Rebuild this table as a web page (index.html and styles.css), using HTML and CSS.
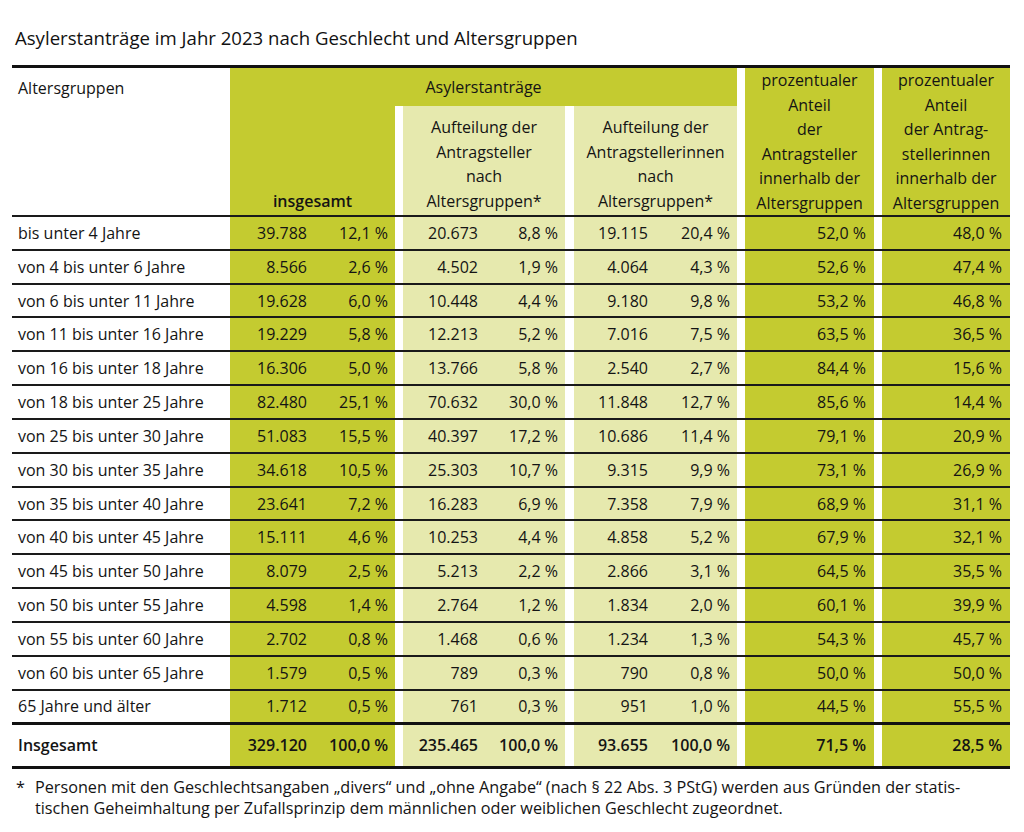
FILE: index.html
```html
<!DOCTYPE html>
<html lang="de">
<head>
<meta charset="utf-8">
<title>Asylerstanträge 2023</title>
<link rel="stylesheet" href="styles.css">
</head>
<body>
<div class="page">
  <h1 class="title">Asylerstanträge im Jahr 2023 nach Geschlecht und Altersgruppen</h1>
  <table class="stats">
    <colgroup>
      <col class="c-label">
      <col class="c-n1"><col class="c-p1">
      <col class="c-gap">
      <col class="c-n2"><col class="c-p2">
      <col class="c-gap9">
      <col class="c-n3"><col class="c-p3">
      <col class="c-gap">
      <col class="c-s1">
      <col class="c-gap">
      <col class="c-s2">
    </colgroup>
    <thead>
      <tr class="h-top">
        <th class="h-label" rowspan="2">Altersgruppen</th>
        <th class="h-main green" colspan="8">Asylerstanträge</th>
        <th class="gap" rowspan="2"></th>
        <th class="h-share green" rowspan="2">prozentualer<br>Anteil<br>der<br>Antragsteller<br>innerhalb der<br>Altersgruppen</th>
        <th class="gap" rowspan="2"></th>
        <th class="h-share green" rowspan="2">prozentualer<br>Anteil<br>der Antrag-<br>stellerinnen<br>innerhalb der<br>Altersgruppen</th>
      </tr>
      <tr class="h-sub">
        <th class="h-total green" colspan="2">insgesamt</th>
        <th class="gap"></th>
        <th class="h-split light" colspan="2">Aufteilung der<br>Antragsteller<br>nach<br>Altersgruppen*</th>
        <th class="gap"></th>
        <th class="h-split light" colspan="2">Aufteilung der<br>Antragstellerinnen<br>nach<br>Altersgruppen*</th>
      </tr>
    </thead>
    <tbody>
      <tr><td class="lbl">bis unter 4 Jahre</td><td class="num green">39.788</td><td class="pct green">12,1&nbsp;%</td><td class="gap"></td><td class="num light">20.673</td><td class="pct light">8,8&nbsp;%</td><td class="gap"></td><td class="num light">19.115</td><td class="pct light">20,4&nbsp;%</td><td class="gap"></td><td class="sh green">52,0&nbsp;%</td><td class="gap"></td><td class="sh green">48,0&nbsp;%</td></tr>
      <tr><td class="lbl">von 4 bis unter 6 Jahre</td><td class="num green">8.566</td><td class="pct green">2,6&nbsp;%</td><td class="gap"></td><td class="num light">4.502</td><td class="pct light">1,9&nbsp;%</td><td class="gap"></td><td class="num light">4.064</td><td class="pct light">4,3&nbsp;%</td><td class="gap"></td><td class="sh green">52,6&nbsp;%</td><td class="gap"></td><td class="sh green">47,4&nbsp;%</td></tr>
      <tr><td class="lbl">von 6 bis unter 11 Jahre</td><td class="num green">19.628</td><td class="pct green">6,0&nbsp;%</td><td class="gap"></td><td class="num light">10.448</td><td class="pct light">4,4&nbsp;%</td><td class="gap"></td><td class="num light">9.180</td><td class="pct light">9,8&nbsp;%</td><td class="gap"></td><td class="sh green">53,2&nbsp;%</td><td class="gap"></td><td class="sh green">46,8&nbsp;%</td></tr>
      <tr><td class="lbl">von 11 bis unter 16 Jahre</td><td class="num green">19.229</td><td class="pct green">5,8&nbsp;%</td><td class="gap"></td><td class="num light">12.213</td><td class="pct light">5,2&nbsp;%</td><td class="gap"></td><td class="num light">7.016</td><td class="pct light">7,5&nbsp;%</td><td class="gap"></td><td class="sh green">63,5&nbsp;%</td><td class="gap"></td><td class="sh green">36,5&nbsp;%</td></tr>
      <tr><td class="lbl">von 16 bis unter 18 Jahre</td><td class="num green">16.306</td><td class="pct green">5,0&nbsp;%</td><td class="gap"></td><td class="num light">13.766</td><td class="pct light">5,8&nbsp;%</td><td class="gap"></td><td class="num light">2.540</td><td class="pct light">2,7&nbsp;%</td><td class="gap"></td><td class="sh green">84,4&nbsp;%</td><td class="gap"></td><td class="sh green">15,6&nbsp;%</td></tr>
      <tr><td class="lbl">von 18 bis unter 25 Jahre</td><td class="num green">82.480</td><td class="pct green">25,1&nbsp;%</td><td class="gap"></td><td class="num light">70.632</td><td class="pct light">30,0&nbsp;%</td><td class="gap"></td><td class="num light">11.848</td><td class="pct light">12,7&nbsp;%</td><td class="gap"></td><td class="sh green">85,6&nbsp;%</td><td class="gap"></td><td class="sh green">14,4&nbsp;%</td></tr>
      <tr><td class="lbl">von 25 bis unter 30 Jahre</td><td class="num green">51.083</td><td class="pct green">15,5&nbsp;%</td><td class="gap"></td><td class="num light">40.397</td><td class="pct light">17,2&nbsp;%</td><td class="gap"></td><td class="num light">10.686</td><td class="pct light">11,4&nbsp;%</td><td class="gap"></td><td class="sh green">79,1&nbsp;%</td><td class="gap"></td><td class="sh green">20,9&nbsp;%</td></tr>
      <tr><td class="lbl">von 30 bis unter 35 Jahre</td><td class="num green">34.618</td><td class="pct green">10,5&nbsp;%</td><td class="gap"></td><td class="num light">25.303</td><td class="pct light">10,7&nbsp;%</td><td class="gap"></td><td class="num light">9.315</td><td class="pct light">9,9&nbsp;%</td><td class="gap"></td><td class="sh green">73,1&nbsp;%</td><td class="gap"></td><td class="sh green">26,9&nbsp;%</td></tr>
      <tr><td class="lbl">von 35 bis unter 40 Jahre</td><td class="num green">23.641</td><td class="pct green">7,2&nbsp;%</td><td class="gap"></td><td class="num light">16.283</td><td class="pct light">6,9&nbsp;%</td><td class="gap"></td><td class="num light">7.358</td><td class="pct light">7,9&nbsp;%</td><td class="gap"></td><td class="sh green">68,9&nbsp;%</td><td class="gap"></td><td class="sh green">31,1&nbsp;%</td></tr>
      <tr><td class="lbl">von 40 bis unter 45 Jahre</td><td class="num green">15.111</td><td class="pct green">4,6&nbsp;%</td><td class="gap"></td><td class="num light">10.253</td><td class="pct light">4,4&nbsp;%</td><td class="gap"></td><td class="num light">4.858</td><td class="pct light">5,2&nbsp;%</td><td class="gap"></td><td class="sh green">67,9&nbsp;%</td><td class="gap"></td><td class="sh green">32,1&nbsp;%</td></tr>
      <tr><td class="lbl">von 45 bis unter 50 Jahre</td><td class="num green">8.079</td><td class="pct green">2,5&nbsp;%</td><td class="gap"></td><td class="num light">5.213</td><td class="pct light">2,2&nbsp;%</td><td class="gap"></td><td class="num light">2.866</td><td class="pct light">3,1&nbsp;%</td><td class="gap"></td><td class="sh green">64,5&nbsp;%</td><td class="gap"></td><td class="sh green">35,5&nbsp;%</td></tr>
      <tr><td class="lbl">von 50 bis unter 55 Jahre</td><td class="num green">4.598</td><td class="pct green">1,4&nbsp;%</td><td class="gap"></td><td class="num light">2.764</td><td class="pct light">1,2&nbsp;%</td><td class="gap"></td><td class="num light">1.834</td><td class="pct light">2,0&nbsp;%</td><td class="gap"></td><td class="sh green">60,1&nbsp;%</td><td class="gap"></td><td class="sh green">39,9&nbsp;%</td></tr>
      <tr><td class="lbl">von 55 bis unter 60 Jahre</td><td class="num green">2.702</td><td class="pct green">0,8&nbsp;%</td><td class="gap"></td><td class="num light">1.468</td><td class="pct light">0,6&nbsp;%</td><td class="gap"></td><td class="num light">1.234</td><td class="pct light">1,3&nbsp;%</td><td class="gap"></td><td class="sh green">54,3&nbsp;%</td><td class="gap"></td><td class="sh green">45,7&nbsp;%</td></tr>
      <tr><td class="lbl">von 60 bis unter 65 Jahre</td><td class="num green">1.579</td><td class="pct green">0,5&nbsp;%</td><td class="gap"></td><td class="num light">789</td><td class="pct light">0,3&nbsp;%</td><td class="gap"></td><td class="num light">790</td><td class="pct light">0,8&nbsp;%</td><td class="gap"></td><td class="sh green">50,0&nbsp;%</td><td class="gap"></td><td class="sh green">50,0&nbsp;%</td></tr>
      <tr class="last"><td class="lbl">65 Jahre und älter</td><td class="num green">1.712</td><td class="pct green">0,5&nbsp;%</td><td class="gap"></td><td class="num light">761</td><td class="pct light">0,3&nbsp;%</td><td class="gap"></td><td class="num light">951</td><td class="pct light">1,0&nbsp;%</td><td class="gap"></td><td class="sh green">44,5&nbsp;%</td><td class="gap"></td><td class="sh green">55,5&nbsp;%</td></tr>
    </tbody>
    <tfoot>
      <tr class="total"><td class="lbl">Insgesamt</td><td class="num green">329.120</td><td class="pct green">100,0&nbsp;%</td><td class="gap"></td><td class="num light">235.465</td><td class="pct light">100,0&nbsp;%</td><td class="gap"></td><td class="num light">93.655</td><td class="pct light">100,0&nbsp;%</td><td class="gap"></td><td class="sh green">71,5&nbsp;%</td><td class="gap"></td><td class="sh green">28,5&nbsp;%</td></tr>
    </tfoot>
  </table>
  <div class="note">
    <span class="note-mark">*</span>
    <p class="note-text">Personen mit den Geschlechtsangaben „divers“ und „ohne Angabe“ (nach § 22 Abs. 3 PStG) werden aus Gründen der statis-<br>tischen Geheimhaltung per Zufallsprinzip dem männlichen oder weiblichen Geschlecht zugeordnet.</p>
  </div>
</div>
</body>
</html>
```

FILE: styles.css
```css
html, body {
  margin: 0;
  padding: 0;
  background: #ffffff;
}

body {
  font-family: "Open Sans", "Noto Sans", "Liberation Sans", sans-serif;
  color: #141414;
}

.page {
  padding: 25px 14px 0 12px;
}

.title {
  margin: 0;
  padding-left: 3px;
  font-size: 18.6px;
  line-height: 26px;
  font-weight: 400;
  color: #111;
}

.stats {
  margin-top: 14px;
  width: 998px;
  table-layout: fixed;
  border-collapse: collapse;
  border-spacing: 0;
  border-top: 3px solid #111;
  font-size: 16px;
}

.c-label { width: 218px; }
.c-n1 { width: 85px; }
.c-p1 { width: 80px; }
.c-gap { width: 8px; }
.c-gap9 { width: 9px; }
.c-n2 { width: 83px; }
.c-p2 { width: 79px; }
.c-n3 { width: 82px; }
.c-p3 { width: 81px; }
.c-s1 { width: 129px; }
.c-s2 { width: 128px; }

.green { background: #c4cb30; }
.light { background: #e6e9ae; }
.gap { background: #ffffff; padding: 0; }

.stats th {
  font-weight: 400;
  padding: 0;
  line-height: 24.5px;
}

.h-top { height: 39px; }
.h-sub { height: 109px; }

.stats thead tr:last-child th,
.stats thead th[rowspan] {
  border-bottom: 2px solid #1a1a1a;
}

.h-label {
  text-align: left;
  vertical-align: top;
  padding: 8px 0 0 6px !important;
}

.h-main {
  text-align: center;
  vertical-align: middle;
}

.h-share {
  text-align: center;
  vertical-align: top;
}

.h-total {
  text-align: center;
  vertical-align: bottom;
  font-weight: 600 !important;
  padding-bottom: 2px !important;
}

.h-split {
  text-align: center;
  vertical-align: bottom;
  padding-bottom: 2px !important;
}

.stats tbody td {
  height: 33.83px;
  padding: 0 8px 0 0;
  border-bottom: 2px solid #1a1a1a;
  vertical-align: middle;
  text-align: right;
  white-space: nowrap;
  box-sizing: border-box;
}

.stats tbody tr.last td {
  border-bottom: 3px solid #111;
}

.stats td.lbl {
  text-align: left;
  padding-left: 6px;
}

.stats td.gap {
  padding: 0;
}

.stats td.pct { padding-right: 7px; }

.stats tfoot td {
  height: 41px;
  padding: 0 8px 0 0;
  border-bottom: 3px solid #111;
  text-align: right;
  vertical-align: middle;
  font-weight: 600;
  white-space: nowrap;
}

.stats tfoot td.lbl {
  text-align: left;
  padding-left: 6px;
}

.stats tfoot td.gap { padding: 0; }
.stats tfoot td.pct { padding-right: 7px; }

.note {
  display: flex;
  margin-top: 8px;
  font-size: 16.2px;
  line-height: 21px;
  color: #141414;
}

.note-mark {
  width: 23px;
  padding-left: 4px;
  box-sizing: border-box;
  flex: none;
}

.note-text {
  margin: 0;
}
```
